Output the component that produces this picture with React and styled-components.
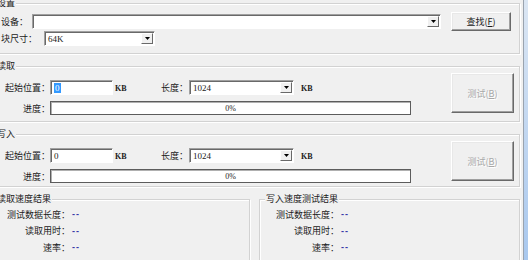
import React from 'react';
import styled, { createGlobalStyle } from 'styled-components';

const GlobalStyle = createGlobalStyle`
  html, body {
    margin: 0;
    padding: 0;
    background: #f0f0f0;
    overflow: hidden;
  }
  body {
    font-family: "Noto Sans CJK SC", "Noto Sans", sans-serif;
    font-size: 9px;
    color: #1a1a1a;
  }
`;

const Window = styled.div`
  display: flex;
  width: 528px;
  height: 260px;
  overflow: hidden;
`;

const Content = styled.div`
  flex: none;
  width: 533px;
  margin-left: -10px;
  padding: 3px 3px 0 0;
  box-sizing: border-box;
  display: flex;
  flex-direction: column;
  gap: 12px;
`;

const Frame = styled.div`
  flex: 1;
  border-left: 1px solid #9aa3ae;
  background: linear-gradient(#dbe6f3, #a9c8ee);
`;

const Group = styled.div`
  flex: ${p => (p.$grow ? 1 : 'none')};
  height: ${p => p.$h}px;
  box-sizing: border-box;
  border: 1px solid #d2d2d2;
  box-shadow: inset 1px 1px 0 #fff, 1px 1px 0 #fff;
  display: flex;
  flex-direction: column;
`;

const Legend = styled.div`
  align-self: flex-start;
  margin: -7px 0 0 5px;
  padding: 0 1px;
  height: 12px;
  line-height: 12px;
  background: #f0f0f0;
`;

const SetupBody = styled.div`
  padding: 3px 10px 0 10px;
  display: flex;
  flex-direction: column;
`;

const Row = styled.div`
  display: flex;
  align-items: center;
  height: ${p => p.$h}px;
`;

const Label = styled.span`
  flex: none;
  width: ${p => p.$w}px;
  text-align: ${p => (p.$right ? 'right' : 'left')};
  white-space: nowrap;
`;

const Combo = styled.div`
  flex: none;
  width: ${p => p.$w}px;
  height: 15px;
  box-sizing: border-box;
  display: flex;
  align-items: center;
  background: #fff;
  border: 1px solid;
  border-color: #a0a0a0 #fff #fff #a0a0a0;
  box-shadow: inset 1px 1px 0 #696969;
`;

const FieldText = styled.span`
  flex: 1;
  padding-left: 3px;
  font-family: "Liberation Serif", serif;
  font-size: 9px;
`;

const Selected = styled.span`
  background: #3399ff;
  color: #fff;
  padding: 0 1px;
`;

const ArrowBtn = styled.div`
  flex: none;
  width: 12px;
  height: 11px;
  box-sizing: border-box;
  margin-right: 1px;
  display: flex;
  align-items: center;
  justify-content: center;
  background: #f0f0f0;
  border: 1px solid;
  border-color: #fff #696969 #696969 #fff;
`;

const TextBox = styled(Combo)``;

const Unit = styled.span`
  flex: none;
  width: ${p => p.$w}px;
  padding-left: ${p => p.$pl || 2}px;
  font-family: "Liberation Serif", serif;
  font-size: 8px;
  font-weight: bold;
  padding-top: 2px;
`;

const Button = styled.button`
  flex: none;
  width: ${p => p.$w}px;
  height: ${p => p.$h}px;
  margin: ${p => p.$m || 0};
  padding: 0;
  box-sizing: border-box;
  background: #f0f0f0;
  border: 1px solid;
  border-color: #fff #696969 #696969 #fff;
  box-shadow: inset -1px -1px 0 #a0a0a0, inset 1px 1px 0 #e8e8e8;
  font-family: inherit;
  font-size: 9px;
  color: ${p => (p.disabled ? '#a8a8a8' : '#1a1a1a')};
  text-shadow: ${p => (p.disabled ? '1px 1px 0 #fff' : 'none')};
`;

const TestBody = styled.div`
  display: flex;
  align-items: flex-start;
  padding: 0 5px 0 10px;
`;

const Fields = styled.div`
  flex: 1;
  margin-top: 8px;
  display: flex;
  flex-direction: column;
  gap: 6px;
`;

const Progress = styled.div`
  flex: none;
  width: 361px;
  height: 14px;
  box-sizing: border-box;
  background: #fff;
  border: 1px solid #5c5c5c;
  box-shadow: inset 1px 1px 0 #b0b0b0;
  display: flex;
  align-items: center;
  justify-content: center;
  font-family: "Liberation Serif", serif;
  font-size: 8px;
`;

const BottomRow = styled.div`
  display: flex;
  gap: 9px;
`;

const StatList = styled.div`
  margin-top: 1px;
  display: flex;
  flex-direction: column;
`;

const StatRow = styled.div`
  display: flex;
  align-items: center;
  height: 16.5px;
`;

const StatValue = styled.span`
  margin-left: 2px;
  color: #3a3aa8;
  font-family: "Liberation Sans", sans-serif;
  font-weight: bold;
  font-size: 9px;
  letter-spacing: 1px;
`;

const Arrow = () => (
  <svg width="5" height="3" viewBox="0 0 5 3">
    <polygon points="0,0 5,0 2.5,3" fill="#000" />
  </svg>
);

const Select = ({ w, value }) => (
  <Combo $w={w}>
    <FieldText>{value}</FieldText>
    <ArrowBtn><Arrow /></ArrowBtn>
  </Combo>
);

const TestGroup = ({ title, h, selected }) => (
  <Group $h={h}>
    <Legend>{title}</Legend>
    <TestBody>
      <Fields>
        <Row $h={15}>
          <Label $w={49} $right>起始位置：</Label>
          <TextBox $w={63}>
            <FieldText>{selected ? <Selected>0</Selected> : '0'}</FieldText>
          </TextBox>
          <Unit $w={46}>KB</Unit>
          <Label $w={28}>长度：</Label>
          <Select w={105} value="1024" />
          <Unit $w={20} $pl={7}>KB</Unit>
        </Row>
        <Row $h={14}>
          <Label $w={49} $right>进度：</Label>
          <Progress>0%</Progress>
        </Row>
      </Fields>
      <Button $w={63} $h={40} $m="1px 0 0 0" disabled>
        测试(<u>B</u>)
      </Button>
    </TestBody>
  </Group>
);

const stats = ['测试数据长度：', '读取用时：', '速率：'];

const ResultGroup = ({ title, w }) => (
  <Group $h={80} $grow={!w} style={w ? { width: w } : undefined}>
    <Legend>{title}</Legend>
    <StatList>
      {stats.map(s => (
        <StatRow key={s}>
          <Label $w={79} $right>{s}</Label>
          <StatValue>--</StatValue>
        </StatRow>
      ))}
    </StatList>
  </Group>
);

export default function App() {
  return (
    <>
      <GlobalStyle />
      <Window>
        <Content>
          <Group $h={51}>
            <Legend>设置</Legend>
            <SetupBody>
              <Row $h={19}>
                <Label $w={31}>设备：</Label>
                <Select w={409} value="" />
                <Button $w={60} $h={19} $m="0 0 0 10px">
                  查找(<u>F</u>)
                </Button>
              </Row>
              <Row $h={15}>
                <Label $w={43}>块尺寸：</Label>
                <Select w={111} value="64K" />
              </Row>
            </SetupBody>
          </Group>
          <TestGroup title="读取" h={56} selected />
          <TestGroup title="写入" h={53} />
          <BottomRow>
            <ResultGroup title="读取速度结果" w={260} />
            <ResultGroup title="写入速度测试结果" />
          </BottomRow>
        </Content>
        <Frame />
      </Window>
    </>
  );
}
